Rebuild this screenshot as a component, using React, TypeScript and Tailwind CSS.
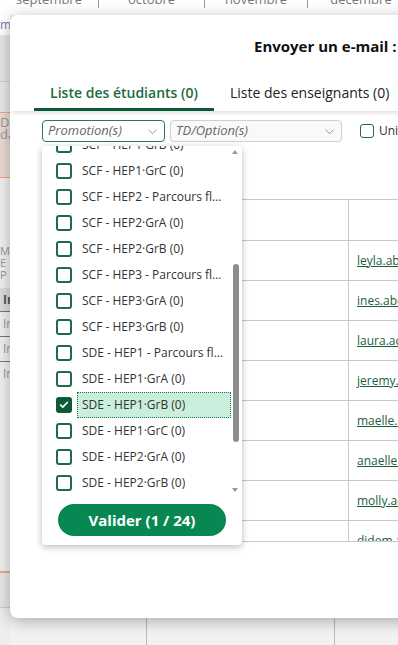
import React from 'react';

const OPTIONS = [
  { label: 'SCF - HEP1·GrB (0)' },
  { label: 'SCF - HEP1·GrC (0)' },
  { label: 'SCF - HEP2 - Parcours flexible (0)' },
  { label: 'SCF - HEP2·GrA (0)' },
  { label: 'SCF - HEP2·GrB (0)' },
  { label: 'SCF - HEP3 - Parcours flexible (0)' },
  { label: 'SCF - HEP3·GrA (0)' },
  { label: 'SCF - HEP3·GrB (0)' },
  { label: 'SDE - HEP1 - Parcours flexible (0)' },
  { label: 'SDE - HEP1·GrA (0)' },
  { label: 'SDE - HEP1·GrB (0)', checked: true },
  { label: 'SDE - HEP1·GrC (0)' },
  { label: 'SDE - HEP2·GrA (0)' },
  { label: 'SDE - HEP2·GrB (0)' },
  { label: 'SDE - HEP3·GrA (0)' },
];

const EMAILS = [
  'leyla.abdallah@etu.univ.fr',
  'ines.abdelli@etu.univ.fr',
  'laura.achard@etu.univ.fr',
  'jeremy.adam@etu.univ.fr',
  'maelle.adler@etu.univ.fr',
  'anaelle.agnes@etu.univ.fr',
  'molly.aeschlimann@etu.univ.fr',
  'didem.akar@etu.univ.fr',
];

const Chevron = () => (
  <svg width="13" height="13" viewBox="0 0 24 24" fill="none" stroke="#888" strokeWidth="1.6" strokeLinecap="round" strokeLinejoin="round">
    <path d="m5 9 7 7 7-7" />
  </svg>
);

function Background() {
  return (
    <div className="flex flex-col h-full">
      {/* months header */}
      <div className="h-[15px] bg-white flex items-start text-[13px] text-[#777]">
        <div className="w-[99px] shrink-0 h-[8px] border-r border-[#999] flex justify-center overflow-hidden">
          <span className="leading-[13px] -mt-[7px]">septembre</span>
        </div>
        <div className="w-[106px] shrink-0 h-[8px] border-r border-[#999] flex justify-center overflow-hidden">
          <span className="leading-[13px] -mt-[7px]">octobre</span>
        </div>
        <div className="w-[103px] shrink-0 h-[8px] border-r border-[#999] flex justify-center overflow-hidden">
          <span className="leading-[13px] -mt-[7px]">novembre</span>
        </div>
        <div className="w-[106px] shrink-0 h-[8px] flex justify-center overflow-hidden">
          <span className="leading-[13px] -mt-[7px]">décembre</span>
        </div>
      </div>

      <div className="flex flex-1">
        {/* sidebar strip */}
        <div className="w-[10px] flex flex-col overflow-hidden text-[#999]">
          <div className="h-[20px] bg-white text-[12px] leading-[20px] text-[#6a7fb5]">m</div>
          <div className="h-[47px] bg-[#e6e6e6] border-b border-[#cfcfcf]" />
          <div className="h-[30px] bg-[#e9e9e9]" />
          <div className="h-[66px] bg-[#ecdcd5] border-y border-[#f0a58a] pt-[3px] text-[13px] leading-[12px]">
            <div>Di</div>
            <div>da</div>
          </div>
          <div className="h-[67px] bg-[#f1f1f1]" />
          <div className="h-[43px] bg-[#f1f1f1] text-[11px] leading-[12px]">
            <div>M</div>
            <div>E</div>
            <div>P</div>
          </div>
          <div className="h-[23px] bg-[#dedede] text-[12px] font-bold text-[#555] leading-[23px] pl-[3px]">In</div>
          <div className="h-[25px] bg-[#f1f1f1] border-t border-[#777] text-[12px] leading-[24px] pl-[3px]">In</div>
          <div className="h-[25px] bg-[#f1f1f1] border-t border-[#777] text-[12px] leading-[24px] pl-[3px]">In</div>
          <div className="h-[25px] bg-[#f1f1f1] border-t border-[#777] text-[12px] leading-[24px] pl-[3px]">In</div>
          <div className="h-[185px] bg-[#f1f1f1]" />
          <div className="h-[36px] bg-[#e8e8e8] border-t-2 border-[#f1a78b]" />
          <div className="flex-1 bg-[#eeeeee] border-t border-[#cccccc]" />
        </div>
        {/* main */}
        <div className="flex-1 flex flex-col bg-[#f2f2f2]">
          <div className="flex-1" />
          <div className="h-[37px] flex border-t border-[#cccccc]">
            <div className="w-[137px] border-r border-[#bbb]" />
            <div className="w-[188px] border-r border-[#bbb]" />
            <div className="flex-1" />
          </div>
        </div>
      </div>
    </div>
  );
}

function Dropdown() {
  return (
    <div className="absolute left-[32px] top-[131px] w-[200px] h-[399px] bg-white rounded-[4px] shadow-[0_2px_7px_rgba(0,0,0,0.28)] flex flex-col">
      <div className="h-[349px] flex overflow-hidden">
        <div className="flex-1 min-w-0 overflow-hidden">
          <div className="-mt-[14px]">
            {OPTIONS.map((o) => (
              <div key={o.label} className="h-[26px] flex items-center pl-[14px]">
                {o.checked ? (
                  <span className="w-[16px] h-[16px] rounded-[3px] bg-[#0d5c38] flex items-center justify-center shrink-0">
                    <svg width="10" height="10" viewBox="0 0 24 24" fill="none" stroke="white" strokeWidth="4" strokeLinecap="round" strokeLinejoin="round">
                      <path d="M20 6 9 17l-5-5" />
                    </svg>
                  </span>
                ) : (
                  <span className="w-[16px] h-[16px] rounded-[3px] border-2 border-[#1f6b4a] shrink-0" />
                )}
                <span
                  className={
                    o.checked
                      ? 'ml-[5px] flex-1 min-w-0 h-full flex items-center pl-[5px] pr-[3px] bg-[#c9eedc] outline-1 outline-dotted -outline-offset-1 outline-[#1a7a4a]'
                      : 'ml-[5px] flex-1 min-w-0 h-full flex items-center pl-[5px] pr-[3px]'
                  }
                >
                  <span className="truncate text-[12px] text-[#333]">{o.label}</span>
                </span>
              </div>
            ))}
          </div>
        </div>
        {/* scrollbar */}
        <div className="w-[8px] mr-[3px] shrink-0 flex flex-col items-center">
          <div className="mt-[4px] w-0 h-0 border-l-[3px] border-r-[3px] border-b-[4px] border-l-transparent border-r-transparent border-b-[#999]" />
          <div className="mt-[110px] ml-[2px] w-[6px] h-[178px] rounded-full bg-[#8d8d8d]" />
          <div className="flex-1" />
          <div className="mb-[3px] w-0 h-0 border-l-[3px] border-r-[3px] border-t-[4px] border-l-transparent border-r-transparent border-t-[#999]" />
        </div>
      </div>
      <div className="flex justify-center pt-[9px]">
        <button className="w-[168px] h-[32px] rounded-full bg-[#078853] text-white font-bold text-[15px]">
          Valider (1 / 24)
        </button>
      </div>
    </div>
  );
}

function Modal() {
  return (
    <div className="absolute left-[10px] top-[15px] w-[440px] h-[603px] rounded-[8px] bg-white shadow-[0_3px_16px_rgba(0,0,0,0.3)] flex flex-col">
      <div className="pt-[22px] pl-[244px] text-[15px] leading-[18px] font-bold text-[#111] whitespace-nowrap">
        Envoyer un e-mail :
      </div>

      <div className="mt-[22px] flex pl-[24px] shadow-[0_4px_4px_-2px_rgba(0,0,0,0.12)]">
        <div className="w-[180px] shrink-0 h-[34px] flex items-center justify-center border-b-[3px] border-[#0b5a36] text-[14px] font-semibold text-[#1c6b45] whitespace-nowrap">
          Liste des étudiants (0)
        </div>
        <div className="h-[34px] shrink-0 px-[16px] flex items-center border-b-[3px] border-transparent text-[14px] font-medium text-[#222] whitespace-nowrap">
          Liste des enseignants (0)
        </div>
      </div>

      <div className="mt-[9px] pl-[32px] flex items-center h-[22px] whitespace-nowrap">
        <div className="w-[123px] shrink-0 h-[22px] border border-[#2a7a52] rounded-[4px] flex items-center justify-between pl-[5px] pr-[5px]">
          <span className="italic text-[13px] text-[#666]">Promotion(s)</span>
          <Chevron />
        </div>
        <div className="ml-[5px] w-[172px] shrink-0 h-[22px] border border-[#cfcfcf] bg-[#f9f9f9] rounded-[4px] flex items-center justify-between pl-[5px] pr-[5px]">
          <span className="italic text-[13px] text-[#666]">TD/Option(s)</span>
          <Chevron />
        </div>
        <span className="ml-[18px] w-[14px] h-[14px] border-[1.5px] border-[#1d6b48] rounded-[3px] shrink-0" />
        <span className="ml-[5px] text-[12px] text-[#333]">Uniquement les étudiants</span>
      </div>

      <div className="mt-[57px] ml-[32px] h-[343px] overflow-hidden border-t border-b border-[#c8c8c8]">
        <div className="h-[41px] flex border-b border-[#c8c8c8]">
          <div className="w-[307px] shrink-0 border-r border-[#c8c8c8]" />
          <div className="flex-1 min-w-0" />
        </div>
        {EMAILS.map((e) => (
          <div key={e} className="h-[40px] flex border-b border-[#c8c8c8]">
            <div className="w-[307px] shrink-0 border-r border-[#c8c8c8]" />
            <div className="flex-1 min-w-0 overflow-hidden pl-[8px] flex items-center whitespace-nowrap">
              <a className="text-[12px] text-[#1b5e3e] underline">{e}</a>
            </div>
          </div>
        ))}
      </div>

      <Dropdown />
    </div>
  );
}

export default function App() {
  return (
    <div className="relative w-[398px] h-[645px] overflow-hidden bg-[#f2f2f2] font-['Open_Sans',sans-serif]">
      <Background />
      <Modal />
    </div>
  );
}
